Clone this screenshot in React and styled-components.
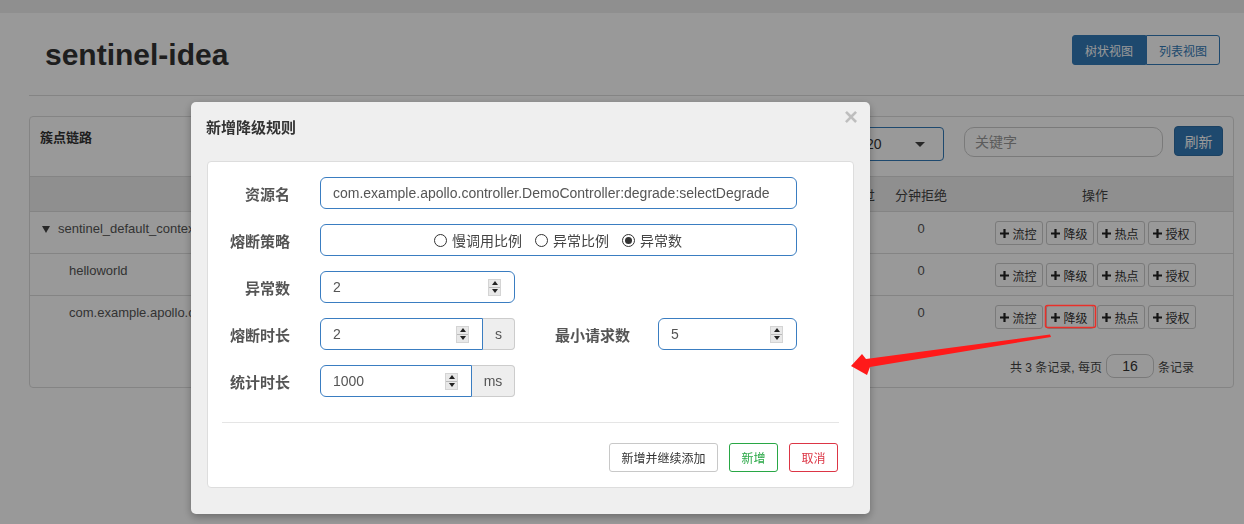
import styled, { createGlobalStyle } from 'styled-components';

const GlobalStyle = createGlobalStyle`
  html, body {
    margin: 0;
    padding: 0;
    background: #fff;
  }
  body {
    font-family: 'Liberation Sans', 'Noto Sans CJK SC', sans-serif;
    font-size: 13px;
    color: #333;
    overflow: hidden;
  }
  * {
    box-sizing: border-box;
  }
`;

const TopBar = styled.div`
  height: 13px;
  background: #eee;
`;

const Container = styled.div`
  padding-left: 29px;
`;

const PageHeader = styled.header`
  display: flex;
  justify-content: space-between;
  align-items: flex-start;
  height: 83px;
  padding: 22px 24px 0 16px;
  border-bottom: 1px solid #ddd;
`;

const Title = styled.h1`
  margin: 3px 0 0;
  font-size: 30px;
  line-height: 34px;
  font-weight: bold;
  color: #333;
`;

const ToggleGroup = styled.div`
  display: flex;
`;

const ToggleButton = styled.button`
  height: 30px;
  padding: 0 12px;
  font: 12px 'Liberation Sans', 'Noto Sans CJK SC', sans-serif;
  border: 1px solid #337ab7;
  background: ${(p) => (p.$active ? '#337ab7' : '#fff')};
  color: ${(p) => (p.$active ? '#fff' : '#337ab7')};
  border-radius: ${(p) => (p.$active ? '3px 0 0 3px' : '0 3px 3px 0')};
`;

const Panel = styled.section`
  margin: 20px 10px 0 0;
  border: 1px solid #ddd;
  border-radius: 4px;
`;

const PanelHeading = styled.div`
  display: flex;
  justify-content: space-between;
  align-items: flex-start;
  height: 60px;
  padding: 11px 10px 0;
  border-bottom: 1px solid #ddd;
`;

const PanelTitle = styled.div`
  font-size: 13px;
  line-height: 20px;
  font-weight: bold;
  color: #333;
`;

const Controls = styled.div`
  display: flex;
  align-items: flex-start;
  margin-top: -1px;
`;

const Select = styled.div`
  display: flex;
  align-items: center;
  justify-content: space-between;
  width: 91px;
  height: 34px;
  padding: 0 18px 0 12px;
  border: 1px solid #337ab7;
  border-radius: 4px;
  font-size: 14px;
  color: #333;
  &::after {
    content: '';
    border-left: 5px solid transparent;
    border-right: 5px solid transparent;
    border-top: 5px solid #444;
  }
`;

const Keyword = styled.div`
  width: 199px;
  height: 30px;
  margin-left: 20px;
  padding-left: 10px;
  border: 1px solid #ccc;
  border-radius: 10px;
  font-size: 14px;
  line-height: 28px;
  color: #999;
`;

const PrimaryButton = styled.button`
  width: 49px;
  height: 30px;
  margin: -1px 0 0 11px;
  border: 1px solid #2e6da4;
  border-radius: 4px;
  background: #337ab7;
  color: #fff;
  font: 14px 'Liberation Sans', 'Noto Sans CJK SC', sans-serif;
`;

const columns = '1fr 72px 72px 72px 72px 72px 72px 276px';

const TableHead = styled.div`
  display: grid;
  grid-template-columns: ${columns};
  height: 35px;
  background: #efefef;
  border-bottom: 1px solid #ddd;
  align-items: center;
  text-align: center;
  font-size: 13px;
  color: #444;
`;

const Row = styled.div`
  display: grid;
  grid-template-columns: ${columns};
  padding: 8px 0;
  border-bottom: ${(p) => (p.$last ? 'none' : '1px solid #ddd')};
  font-size: 13px;
  line-height: 18px;
  color: #555;
`;

const NameCell = styled.div`
  display: flex;
  align-items: center;
  gap: 8px;
  height: 18px;
  padding-left: ${(p) => (p.$indent ? '39px' : '12px')};
  white-space: nowrap;
  overflow: hidden;
`;

const Caret = styled.span`
  border-left: 4px solid transparent;
  border-right: 4px solid transparent;
  border-top: 7px solid #444;
`;

const NumCell = styled.div`
  text-align: center;
`;

const Ops = styled.div`
  display: flex;
  justify-content: center;
  gap: 3px;
  margin-top: 1px;
`;

const OpButton = styled.button`
  display: flex;
  align-items: center;
  justify-content: center;
  gap: 3px;
  width: 48px;
  height: 24px;
  padding: 0;
  border: 1px solid #ccc;
  border-radius: 3px;
  background: #fff;
  color: #333;
  font: 12px 'Liberation Sans', 'Noto Sans CJK SC', sans-serif;
`;

const Pagination = styled.div`
  display: flex;
  justify-content: flex-end;
  align-items: center;
  gap: 4px;
  padding: 17px 39px 9px 0;
  font-size: 12px;
  color: #444;
`;

const PageSize = styled.div`
  width: 48px;
  height: 24px;
  border: 1px solid #ccc;
  border-radius: 8px;
  text-align: center;
  line-height: 22px;
  font-size: 14px;
  color: #333;
`;

const Backdrop = styled.div`
  position: fixed;
  inset: 0;
  background: rgba(0, 0, 0, 0.4);
`;

const Modal = styled.div`
  position: fixed;
  top: 102px;
  left: 191px;
  width: 679px;
  background: #efefef;
  border-radius: 5px;
  box-shadow: 0 3px 9px rgba(0, 0, 0, 0.3);
`;

const ModalHeader = styled.div`
  display: flex;
  justify-content: space-between;
  align-items: flex-start;
  padding: 15px 12px 0 15px;
`;

const ModalTitle = styled.h4`
  margin: 0;
  font-size: 15px;
  line-height: 22px;
  font-weight: bold;
  color: #333;
`;

const Close = styled.span`
  margin-top: -12px;
  font-size: 24px;
  line-height: 24px;
  font-weight: bold;
  color: #000;
  opacity: 0.2;
`;

const ModalBody = styled.div`
  padding: 22px 16px 26px;
`;

const Card = styled.div`
  background: #fff;
  border: 1px solid #ddd;
  border-radius: 4px;
  padding: 15px 0;
`;

const Form = styled.div`
  display: flex;
  flex-direction: column;
  gap: 15px;
`;

const FormRow = styled.div`
  display: flex;
  align-items: center;
  height: 32px;
`;

const Label = styled.label`
  width: ${(p) => p.$width || 82}px;
  margin-right: ${(p) => p.$gap || 30}px;
  padding-top: 4px;
  text-align: right;
  font-size: 15px;
  line-height: 20px;
  font-weight: bold;
  color: #555;
  white-space: nowrap;
`;

const Field = styled.div`
  display: flex;
  align-items: center;
  justify-content: ${(p) => (p.$center ? 'center' : 'space-between')};
  gap: ${(p) => (p.$center ? '13px' : '0')};
  width: ${(p) => p.$width}px;
  height: 32px;
  padding: 0 13px 0 12px;
  border: 1px solid #3a7dc1;
  border-radius: ${(p) => (p.$addon ? '6px 0 0 6px' : '6px')};
  font-size: 14px;
  color: #555;
  white-space: nowrap;
`;

const Addon = styled.span`
  display: flex;
  align-items: center;
  justify-content: center;
  width: ${(p) => p.$width}px;
  height: 32px;
  background: #eee;
  border: 1px solid #ccc;
  border-left: none;
  border-radius: 0 4px 4px 0;
  font-size: 14px;
  color: #555;
`;

const InputGroup = styled.div`
  display: flex;
`;

const Spinner = styled.span`
  display: flex;
  flex-direction: column;
  width: 13px;
  height: 17px;
  background: #e8e8e8;
  border: 1px solid #d4d4d4;
`;

const SpinHalf = styled.span`
  flex: 1;
  display: flex;
  align-items: center;
  justify-content: center;
  & + & {
    border-top: 1px solid #bbb;
  }
  &::after {
    content: '';
    border-left: 3px solid transparent;
    border-right: 3px solid transparent;
    ${(p) => (p.$down ? 'border-top: 4px solid #222;' : 'border-bottom: 4px solid #222;')}
  }
`;

const RadioOption = styled.span`
  display: flex;
  align-items: center;
  gap: 5px;
  color: #444;
`;

const RadioMark = styled.span`
  display: flex;
  align-items: center;
  justify-content: center;
  width: 13px;
  height: 13px;
  border: 1px solid #333;
  border-radius: 50%;
  &::after {
    content: '';
    width: 7px;
    height: 7px;
    border-radius: 50%;
    background: ${(p) => (p.$checked ? '#333' : 'transparent')};
  }
`;

const Divider = styled.hr`
  margin: 25px 14px 0;
  border: none;
  border-top: 1px solid #e5e5e5;
`;

const Footer = styled.div`
  display: flex;
  justify-content: flex-end;
  gap: 11px;
  padding: 20px 15px 0 0;
`;

const tones = {
  default: '#c8c8c8',
  success: '#28a745',
  danger: '#dc3545',
};

const FooterButton = styled.button`
  height: 29px;
  padding: 0 11.5px;
  background: #fff;
  border: 1px solid ${(p) => tones[p.$tone || 'default']};
  color: ${(p) => (p.$tone ? tones[p.$tone] : '#333')};
  border-radius: 3px;
  font: 12px 'Liberation Sans', 'Noto Sans CJK SC', sans-serif;
`;

const Annotation = styled.svg`
  position: fixed;
  left: 0;
  top: 0;
  pointer-events: none;
`;

// the stat columns behind the dialog stay empty; only the last two peek out
const headers = ['', '', '', '', '', '分钟通过', '分钟拒绝', '操作'];
const stats = ['', '', '', '', '', '0'];
const ops = ['流控', '降级', '热点', '授权'];
const rows = [
  { name: 'sentinel_default_context', root: true },
  { name: 'helloworld' },
  { name: 'com.example.apollo.controller.DemoController:degrade:selectDegrade' },
];

function Plus() {
  return (
    <svg width="9" height="9" viewBox="0 0 9 9">
      <path d="M3.4 0h2.2v3.4H9v2.2H5.6V9H3.4V5.6H0V3.4h3.4z" fill="#222" />
    </svg>
  );
}

function NumberField({ value, width, addon }) {
  return (
    <Field $width={width} $addon={addon}>
      {value}
      <Spinner>
        <SpinHalf />
        <SpinHalf $down />
      </Spinner>
    </Field>
  );
}

export default function App() {
  return (
    <>
      <GlobalStyle />
      <TopBar />
      <Container>
        <PageHeader>
          <Title>sentinel-idea</Title>
          <ToggleGroup>
            <ToggleButton $active>树状视图</ToggleButton>
            <ToggleButton>列表视图</ToggleButton>
          </ToggleGroup>
        </PageHeader>
        <Panel>
          <PanelHeading>
            <PanelTitle>簇点链路</PanelTitle>
            <Controls>
              <Select>20</Select>
              <Keyword>关键字</Keyword>
              <PrimaryButton>刷新</PrimaryButton>
            </Controls>
          </PanelHeading>
          <TableHead>
            {headers.map((h, i) => (
              <div key={i}>{h}</div>
            ))}
          </TableHead>
          {rows.map((r, i) => (
            <Row key={r.name} $last={i === rows.length - 1}>
              <NameCell $indent={!r.root}>
                {r.root && <Caret />}
                {r.name}
              </NameCell>
              {stats.map((v, c) => (
                <NumCell key={c}>{v}</NumCell>
              ))}
              <Ops>
                {ops.map((o) => (
                  <OpButton key={o}>
                    <Plus />
                    {o}
                  </OpButton>
                ))}
              </Ops>
            </Row>
          ))}
          <Pagination>
            <span>共 3 条记录, 每页</span>
            <PageSize>16</PageSize>
            <span>条记录</span>
          </Pagination>
        </Panel>
      </Container>

      <Backdrop />

      <Modal>
        <ModalHeader>
          <ModalTitle>新增降级规则</ModalTitle>
          <Close>×</Close>
        </ModalHeader>
        <ModalBody>
          <Card>
            <Form>
              <FormRow>
                <Label>资源名</Label>
                <Field $width={477}>com.example.apollo.controller.DemoController:degrade:selectDegrade</Field>
              </FormRow>
              <FormRow>
                <Label>熔断策略</Label>
                <Field $width={477} $center>
                  <RadioOption>
                    <RadioMark />
                    慢调用比例
                  </RadioOption>
                  <RadioOption>
                    <RadioMark />
                    异常比例
                  </RadioOption>
                  <RadioOption>
                    <RadioMark $checked />
                    异常数
                  </RadioOption>
                </Field>
              </FormRow>
              <FormRow>
                <Label>异常数</Label>
                <NumberField value="2" width={195} />
              </FormRow>
              <FormRow>
                <Label>熔断时长</Label>
                <InputGroup>
                  <NumberField value="2" width={163} addon />
                  <Addon $width={32}>s</Addon>
                </InputGroup>
                <Label $width={115} $gap={28}>最小请求数</Label>
                <NumberField value="5" width={139} />
              </FormRow>
              <FormRow>
                <Label>统计时长</Label>
                <InputGroup>
                  <NumberField value="1000" width={152} addon />
                  <Addon $width={43}>ms</Addon>
                </InputGroup>
              </FormRow>
            </Form>
            <Divider />
            <Footer>
              <FooterButton>新增并继续添加</FooterButton>
              <FooterButton $tone="success">新增</FooterButton>
              <FooterButton $tone="danger">取消</FooterButton>
            </Footer>
          </Card>
        </ModalBody>
      </Modal>

      <Annotation width="1244" height="524">
        <rect x="1045.5" y="305.5" width="50" height="22" rx="2" fill="none" stroke="#e8302a" strokeWidth="1.5" />
        <polygon
          points="851,366 862,354 866,359 1050,334.5 1051,337 870,367 867,375"
          fill="#ff1a1a"
        />
      </Annotation>
    </>
  );
}
